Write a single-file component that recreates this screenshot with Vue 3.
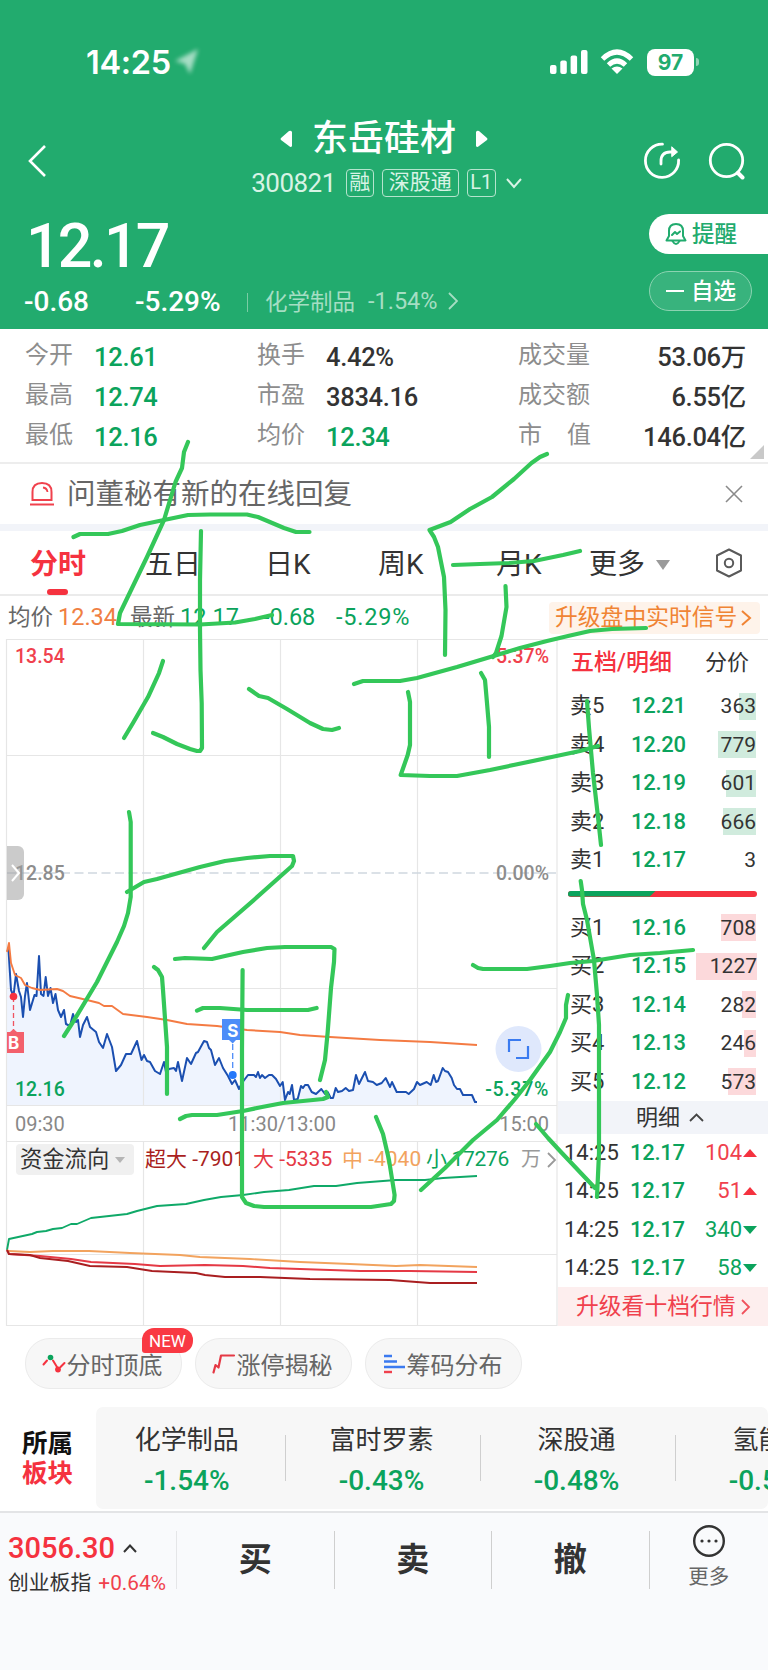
<script setup>
	import { ref, computed } from 'vue';

	const stats = [
		['今开', '12.61', true, '换手', '4.42%', false, '成交量', '53.06万'],
		['最高', '12.74', true, '市盈', '3834.16', false, '成交额', '6.55亿'],
		['最低', '12.16', true, '均价', '12.34', true, '市值', '146.04亿'],
	];

	const tabs = ['分时', '五日', '日K', '周K', '月K', '更多'];
	const activeTab = ref('分时');

	const asks = [
		{ label: '卖5', price: '12.21', qty: 363, bar: 17.5 },
		{ label: '卖4', price: '12.20', qty: 779, bar: 38.5 },
		{ label: '卖3', price: '12.19', qty: 601, bar: 30 },
		{ label: '卖2', price: '12.18', qty: 666, bar: 33 },
		{ label: '卖1', price: '12.17', qty: 3, bar: 0 },
	];

	const bids = [
		{ label: '买1', price: '12.16', qty: 708, bar: 35 },
		{ label: '买2', price: '12.15', qty: 1227, bar: 61 },
		{ label: '买3', price: '12.14', qty: 282, bar: 14 },
		{ label: '买4', price: '12.13', qty: 246, bar: 12 },
		{ label: '买5', price: '12.12', qty: 573, bar: 28 },
	];

	const trades = [
		{ time: '14:25', price: '12.17', qty: 104, up: true },
		{ time: '14:25', price: '12.17', qty: 51, up: true },
		{ time: '14:25', price: '12.17', qty: 340, up: false },
		{ time: '14:25', price: '12.17', qty: 58, up: false },
	];

	const sectors = [
		{ name: '化学制品', change: '-1.54%' },
		{ name: '富时罗素', change: '-0.43%' },
		{ name: '深股通', change: '-0.48%' },
		{ name: '氢能源', change: '-0.52%' },
	];

	const price =
		'7,951 8.5,950 11,990 13.5,996 16,974 19,991 21,997 23,1017 25,996 27,983 30,1010 33,1000 34.5,995 36.5,996 39,956 41,994 43.5,996 45.7,977 48,996 50.5,988 53,1003 55.5,994 58,1010 61,1017 64,1010 66,1024 70,1026 73,1014 76,1022 78,1020 80,1037 83,1025 87,1017 90,1027 96,1032 99,1042 103,1048 107,1034 112,1047 116,1071 121,1065 126,1054 131,1054 137,1041 141.5,1060 144,1055 147,1061 150,1062 155,1071 160,1074 164,1062 166,1072 169,1069 174,1068 176,1071 178,1062 182,1081 187,1058 191,1064 196,1053 198,1052 204,1041 207,1042 209,1048 211,1050 215,1065 219,1058 223,1068 228,1076 232,1084 235,1080 239,1089 242,1083 248,1075 254,1075 256,1077 258,1072 260,1078 262,1075 265,1078 269,1075 272,1075 276,1079 280,1086 282.7,1082 285,1100 288,1092 289.7,1094 292,1085 294,1100 297.7,1099 301,1086 303,1088 305,1085 308,1085 311.7,1092 316,1094 321.3,1089 325,1094 327.7,1092 330.7,1098 333,1098 335.7,1088 338,1092 342,1091 345.7,1088 349,1091 353,1090 356,1075 359,1084 365,1072 368,1081 373,1082 376.7,1085 381.7,1083 385.7,1078 390,1087 392,1082 396.7,1092 406,1092 408.7,1094 414,1089 417,1082 420,1085 426.7,1082 430.7,1085 433.7,1075 436,1082 438,1081 442.7,1068 445,1071 448,1072 451.7,1078 454,1085 457,1089 460,1089 463,1095 472,1095 475,1102 477,1102';

	const average =
		'7,952 9,943 11,963 15,975 21,978 25,985 32,988 40,990 57,989 63,991 70,996 87,1000 99,1003 104,1006 112,1006 123,1014 147,1017 167,1020 187,1024 217,1026 247,1030 280,1032 300,1035 330,1037 380,1040 430,1042 477,1045';

	const area = computed(() => `${price} 477,1105 7,1105`);

	const flows = [
		{
			color: '#0fa968',
			points: '7,1250 9,1239 32,1234 37,1232 46,1231 53,1229 62,1228 71,1224 77,1224 91,1218 109,1216 127,1214 137,1211 157,1206 186,1204 204,1200 221,1197 243,1195 264,1192 289,1190 314,1186 336,1186 357,1183 396,1180 425,1180 443,1178 477,1176',
		},
		{
			color: '#f2a35e',
			points: '7,1250 9,1251 30,1252 53,1251 71,1251 89,1251 130,1253 180,1255 200,1257 250,1259 300,1262 350,1264 396,1266 420,1265 477,1267',
		},
		{
			color: '#e53945',
			points: '7,1250 9,1254 40,1256 71,1259 91,1262 135,1264 160,1266 205,1265 243,1266 270,1268 360,1271 410,1271 477,1272',
		},
		{
			color: '#a91e20',
			points: '7,1250 9,1254 30,1255 40,1258 68,1261 90,1266 127,1267 152,1271 196,1273 205,1275 225,1277 260,1277 310,1279 390,1280 410,1281.5 430,1283 477,1283',
		},
	];

	// handwritten strokes over the page
	const strokes = [
		'188,442 184,452 182,468 175.5,482 164,520 147,557 120,613 118,624 200,624.5 235,622.5 255,619 272,615',
		'73.5,537 80,534 108,534 122,531 140,525 164,520 188,515 210,514.5 247,514.5 258,517 284,528 296,532 309.5,532',
		'201,531 200,580 200,630 200.5,670 201.7,703 202,748 200,751 197,751 190,749 177,744 163,737 153,733',
		'163,661 159,673 148,697 133,723 124,738',
		'249,689 259,696 268,698 287,709 310,723 323,729 332,730 339,728',
		'547,454 540,457 531.5,463 514,479 492,497 470,509 450.6,522 429.5,530 434,537 438,547 444,577 445.5,610 445,655',
		'453,565 480,564 509,563 534,561 563,555 580,551',
		'505.5,586 506.5,607 501.5,636 496,653 493,657',
		'354,684 363,681 380,681 400,681 417,678 457,667 497,655 520,648 547,641 568,636 590,631 612,629 646,628',
		'408,692 410,702 410,745 407.7,755 400.7,775 430,776 457,776 490,770 547,758 580,751 598,746',
		'481,673 485,680 487,703 489,727 489,757',
		'129,812 130.7,822 130.7,897 128,913 124,926 117,942 97,982 73,1022 64,1036',
		'127,892 144,882 157,879 200,867 225,861 247,858 270,856 293,856 294,861 292,866 255,899 217,932 204,948',
		'154,967 158,970 162,977 163,990 167,1047 167,1094',
		'175,959 185,958 212,959 225,956 243,952 267,948 285,947 331,947 334.5,949 334,962 331,988 327.6,1033 325,1060 320,1080',
		'197,1010.6 203,1008 220,1008 247,1010 308,1010 316.6,1008',
		'242.6,970 242,1050 242,1197 246,1203 254,1206 264,1207 371,1207 391,1204 394,1201 394.6,1195 389,1160 383,1134 376,1117',
		'180,1119 186,1116 192,1115 217,1115 243,1111 262,1107 283,1103 323,1099 328,1097 326,1092',
		'587,701 589,728 593,773 598,817 601,845',
		'580.7,881 582,890 583,904 587,920 594,960 597,995 599,1025 599,1153 597,1197',
		'473,965 478,968 483,969 527,969 550,966 570,963 593,961 630,955 660,953 693,950',
		'568,995 566,1005 566,1018 560,1032 550,1052 530,1080 515,1099 497,1120 473,1140 445,1168 421,1190',
		'536,1124 548,1138 560,1151 595,1188',
	];
</script>

<template>
	<main>
		<header class="top">
			<div class="status">
				<span class="clock">14:25</span>
				<svg class="location" width="30" height="30" viewBox="0 0 30 30">
					<path d="M25 2 L17 27 L12 17 L2 14 Z" fill="#fff" opacity=".6" />
				</svg>
				<svg class="signal" width="38" height="26" viewBox="0 0 38 26" fill="#fff">
					<rect x="0" y="16" width="6.5" height="9" rx="2" />
					<rect x="10.3" y="11.5" width="6.5" height="13.5" rx="2" />
					<rect x="20.6" y="6.5" width="6.5" height="18.5" rx="2" />
					<rect x="31" y="1" width="6.5" height="24" rx="2" />
				</svg>
				<svg class="wifi" width="34" height="26" viewBox="0 0 34 26" fill="none" stroke="#fff" stroke-width="5">
					<path d="M2.5 10 Q17 -4 31.5 10" />
					<path d="M8.5 16 Q17 8 25.5 16" />
					<path d="M17 25 L11.5 19.6 Q17 15.5 22.5 19.6 Z" fill="#fff" stroke="none" />
				</svg>
				<span class="battery">97</span>
				<span class="battery-tip"></span>
			</div>

			<div class="nav">
				<svg class="back" width="20" height="34" viewBox="0 0 20 34" fill="none" stroke="#fff" stroke-width="2.6">
					<path d="M18 2 L3 17 L18 32" />
				</svg>
				<div class="title">
					<div class="name">
						<svg width="13" height="18" viewBox="0 0 13 18"><path d="M12 2 V16 Q11 18 9 16 L1 10 Q0 9 1 8 L9 1 Q11 0 12 2Z" fill="#fff" /></svg>
						<h1>东岳硅材</h1>
						<svg width="13" height="18" viewBox="0 0 13 18"><path d="M1 2 V16 Q2 18 4 16 L12 10 Q13 9 12 8 L4 1 Q2 0 1 2Z" fill="#fff" /></svg>
					</div>
					<div class="code">
						<span class="digits">300821</span>
						<span class="tag">融</span>
						<span class="tag wide">深股通</span>
						<span class="tag level">L1</span>
						<svg width="16" height="12" viewBox="0 0 16 12" fill="none" stroke="#d8f3e5" stroke-width="2"><path d="M1 2 L8 10 L15 2" /></svg>
					</div>
				</div>
				<svg class="share" width="38" height="38" viewBox="0 0 38 38" fill="none" stroke="#fff" stroke-width="2.8" stroke-linecap="round">
					<path d="M19.5 2.2 A16.6 16.6 0 1 0 35.6 18" />
					<path d="M18 22 V19 Q18 10 27 10 H32" />
					<path d="M29 5 L34.5 10 L29 14.5 Z" fill="#fff" stroke-width="1" />
				</svg>
				<svg width="38" height="38" viewBox="0 0 38 38" fill="none" stroke="#fff" stroke-width="2.8" stroke-linecap="round">
					<circle cx="18.5" cy="18.5" r="16.2" />
					<path d="M30 31 L34.5 35.5" stroke-width="4" />
				</svg>
			</div>

			<div class="quote">
				<div>
					<div class="last">12.17</div>
					<div class="change">
						<span class="diff">-0.68</span>
						<span class="pct">-5.29%</span>
						<i></i>
						<span class="industry">化学制品</span>
						<span class="ipct">-1.54%</span>
						<svg width="10" height="18" viewBox="0 0 10 18" fill="none" stroke="#a5dec3" stroke-width="1.8"><path d="M1 1 L9 9 L1 17" /></svg>
					</div>
				</div>
				<div class="actions">
					<button class="remind">
						<svg width="22" height="24" viewBox="0 0 22 24" fill="none" stroke="#21ab6e" stroke-width="2" stroke-linejoin="round" stroke-linecap="round">
							<path d="M4 12 V9 Q4 2 11 2 Q18 2 18 9 V14 L20.5 18.5 H1.5 L4 14 Z" />
							<path d="M7.5 19 Q11 25 14.5 19" />
							<path d="M7 13 L10 10 L12 12 L15 9.5" />
						</svg>
						提醒
					</button>
					<button class="watch"><i></i>自选</button>
				</div>
			</div>
		</header>

		<section class="stats">
			<div v-for="row in stats" :key="row[0]" class="stat-row">
				<label>{{ row[0] }}</label>
				<b :class="{ down: row[2] }">{{ row[1] }}</b>
				<label>{{ row[3] }}</label>
				<b :class="{ down: row[5] }">{{ row[4] }}</b>
				<label :class="{ spread: row[6] === '市值' }">
					<span v-for="c in row[6]" :key="c">{{ c }}</span>
				</label>
				<b class="right">{{ row[7] }}</b>
			</div>
			<span class="corner"></span>
		</section>

		<section class="notice">
			<svg width="26" height="26" viewBox="0 0 26 26" fill="none" stroke="#f0414d" stroke-width="2">
				<path d="M3.5 19 V11 Q3.5 2 13 2 Q22.5 2 22.5 11 V19 Z" />
				<path d="M1 23.5 H25" />
				<path d="M14 6.5 Q18 7 18.5 11" stroke-width="1.8" />
			</svg>
			<p>问董秘有新的在线回复</p>
			<svg width="18" height="18" viewBox="0 0 18 18" stroke="#8a8a8a" stroke-width="1.6"><path d="M1 1 L17 17 M17 1 L1 17" /></svg>
		</section>

		<nav class="tabs">
			<a
				v-for="tab in tabs"
				:key="tab"
				:class="{ active: tab === activeTab }"
				@click="activeTab = tab"
			>{{ tab }}</a>
			<svg class="more-caret" width="14" height="10" viewBox="0 0 14 10"><path d="M0 0 H14 L7 10Z" fill="#9a9a9a" /></svg>
			<svg class="settings" width="28" height="30" viewBox="0 0 28 30" fill="none" stroke="#5a5a5a" stroke-width="2" stroke-linejoin="round">
				<path d="M14 1.5 L26 7.5 V22.5 L14 28.5 L2 22.5 V7.5 Z" />
				<circle cx="14" cy="15" r="4.2" />
			</svg>
		</nav>

		<section class="summary">
			<span>均价</span>
			<span class="num orange">12.34</span>
			<span>最新</span>
			<span class="num down">12.17</span>
			<span class="num down">-0.68</span>
			<span class="num down">-5.29%</span>
			<a>升级盘中实时信号<svg width="11" height="18" viewBox="0 0 11 18" fill="none" stroke="#f08434" stroke-width="2"><path d="M1 2 L9 9 L1 16" /></svg></a>
		</section>

		<section class="market">
			<div class="charts">
				<svg class="plot" width="558" height="687" viewBox="0 639 558 687" fill="none">
					<polygon :points="area" fill="#eff4fe" />
					<path d="M6.5 639.5 H557 M6.5 755.5 H557 M6.5 988.5 H557 M6.5 1105.5 H557 M6.5 1141.5 H557 M6.5 1254.5 H557 M6.5 1325.5 H557 M6.5 639 V1326 M557 639 V1326 M143.5 639 V1105 M280.5 639 V1105 M417.5 639 V1105 M143.5 1141 V1325 M280.5 1141 V1325 M417.5 1141 V1325" stroke="#e6e6e6" stroke-width="1.2" />
					<path d="M7 873 H557" stroke="#cfd8e0" stroke-width="1.4" stroke-dasharray="9 4.5" />
					<polyline :points="price" stroke="#1b4fb0" stroke-width="2" stroke-linejoin="round" />
					<polyline :points="average" stroke="#f47b43" stroke-width="1.9" stroke-linejoin="round" />
					<polyline v-for="f in flows" :key="f.color" :points="f.points" :stroke="f.color" stroke-width="1.9" stroke-linejoin="round" />

					<!-- buy marker -->
					<path d="M13.5 997 V1030" stroke="#ef5360" stroke-width="1.3" stroke-dasharray="5 3" />
					<circle cx="13.5" cy="996.5" r="3.8" fill="#f5323f" />
					<path d="M7 1032 H10 L13.5 1029 L17 1032 H24 V1053 H7 Z" fill="#f3606c" />
					<text x="13.5" y="1049" class="mark">B</text>
					<!-- sell marker -->
					<path d="M232.7 1044 V1072" stroke="#4d8df8" stroke-width="1.3" stroke-dasharray="6 3" />
					<circle cx="232.7" cy="1075" r="4" fill="#2478fa" />
					<path d="M222 1019 H243 V1040 H236 L232.7 1043.5 L229 1040 H222 Z" fill="#4d8df8" />
					<text x="232.7" y="1036.5" class="mark">S</text>

					<circle cx="518.5" cy="1049" r="23" fill="#dfe8fc" />
					<path d="M509 1052 V1040 H521 M528 1046 V1058 H516" stroke="#3a7bf0" stroke-width="2.2" />
				</svg>
				<div class="minute">
					<div class="axis"><span class="up">13.54</span><span class="up">5.37%</span></div>
					<div class="axis mid"><span>12.85</span><span>0.00%</span></div>
					<div class="axis"><span class="down">12.16</span><span class="down wider">-5.37%</span></div>
					<div class="drawer">
						<svg width="10" height="18" viewBox="0 0 10 18" fill="none" stroke="#fff" stroke-width="2"><path d="M1 1 L8 9 L1 17" /></svg>
					</div>
				</div>
				<div class="times"><span>09:30</span><span>11:30/13:00</span><span>15:00</span></div>
				<div class="flow">
					<span class="pill">资金流向<svg width="10" height="6" viewBox="0 0 10 6"><path d="M0 0 H10 L5 6Z" fill="#b5b5b5" /></svg></span>
					<span class="c1">超大 -7901</span>
					<span class="c2">大 -5335</span>
					<span class="c3">中 -4040</span>
					<span class="c4">小 17276</span>
					<span class="unit">万</span>
					<svg width="10" height="16" viewBox="0 0 10 16" fill="none" stroke="#999" stroke-width="1.8"><path d="M1 1 L8 8 L1 15" /></svg>
				</div>
			</div>

			<aside>
				<div class="book-tabs"><strong>五档/明细</strong><span>分价</span></div>
				<div v-for="a in asks" :key="a.label" class="level-row">
					<span>{{ a.label }}</span>
					<span class="down">{{ a.price }}</span>
					<span class="qty"><i class="ask" :style="{ width: a.bar + 'px' }"></i><em>{{ a.qty }}</em></span>
				</div>
				<div class="ratio"><i></i></div>
				<div v-for="b in bids" :key="b.label" class="level-row">
					<span>{{ b.label }}</span>
					<span class="down">{{ b.price }}</span>
					<span class="qty"><i class="bid" :style="{ width: b.bar + 'px' }"></i><em>{{ b.qty }}</em></span>
				</div>
				<div class="detail">
					明细
					<svg width="15" height="9" viewBox="0 0 15 9" fill="none" stroke="#444" stroke-width="1.8"><path d="M1 8 L7.5 1.5 L14 8" /></svg>
				</div>
				<div v-for="(t, i) in trades" :key="i" class="trade-row">
					<span>{{ t.time }}</span>
					<span class="down">{{ t.price }}</span>
					<span :class="['vol', t.up ? 'up' : 'down']">{{ t.qty }}</span>
					<svg width="14" height="8" viewBox="0 0 14 8">
						<path v-if="t.up" d="M0 8 L7 0 L14 8Z" fill="#f5323f" />
						<path v-else d="M0 0 H14 L7 8Z" fill="#0ba35c" />
					</svg>
				</div>
				<a class="upgrade">升级看十档行情<svg width="10" height="16" viewBox="0 0 10 16" fill="none" stroke="#f0525d" stroke-width="1.8"><path d="M1 1 L8 8 L1 15" /></svg></a>
			</aside>
		</section>

		<section class="chips">
			<button>
				<svg width="24" height="20" viewBox="0 0 24 20" fill="none" stroke="#f5323f" stroke-width="2" stroke-linecap="round">
					<path d="M1.5 10.5 L5 6.5 M11 6.5 L15 13 M18.5 13 L22.5 9" />
					<circle cx="8.5" cy="3.5" r="2.8" fill="#0ba35c" stroke="none" />
					<circle cx="16" cy="15.5" r="2.9" fill="#f5323f" stroke="none" />
				</svg>
				分时顶底
				<span class="new">NEW</span>
			</button>
			<button>
				<svg width="24" height="20" viewBox="0 0 24 20" fill="none" stroke="#e53945" stroke-width="2.2" stroke-linecap="round" stroke-linejoin="round">
					<path d="M1.5 18.5 L3.5 11 L6.5 13.5 L9 1.5 H22" />
				</svg>
				涨停揭秘
			</button>
			<button>
				<svg width="24" height="20" viewBox="0 0 24 20" fill="none" stroke="#3b7af0" stroke-width="2.4">
					<path d="M2 2 H10 M2 7.5 H15 M2 13 H23" />
					<path d="M2 18 H10" stroke="#f0414d" />
				</svg>
				筹码分布
			</button>
		</section>

		<section class="sectors">
			<h2>所属<br /><em>板块</em></h2>
			<div class="sector-list">
				<div v-for="s in sectors" :key="s.name" class="sector">
					<p>{{ s.name }}</p>
					<b>{{ s.change }}</b>
				</div>
			</div>
		</section>

		<footer>
			<div class="index">
				<p class="points">3056.30<svg width="14" height="9" viewBox="0 0 14 9" fill="none" stroke="#333" stroke-width="2"><path d="M1 8 L7 1.5 L13 8" /></svg></p>
				<p class="index-name">创业板指 <span>+0.64%</span></p>
			</div>
			<button>买</button>
			<button>卖</button>
			<button>撤</button>
			<div class="more">
				<svg width="34" height="34" viewBox="0 0 34 34" fill="none" stroke="#333" stroke-width="2.4">
					<circle cx="17" cy="17" r="14.8" />
					<path d="M10 17 h.01 M17 17 h.01 M24 17 h.01" stroke-width="3.2" stroke-linecap="round" />
				</svg>
				更多
			</div>
		</footer>

		<svg class="ink" width="768" height="1670" viewBox="0 0 768 1670" fill="none" stroke="#34c759" stroke-width="4.2" stroke-linecap="round" stroke-linejoin="round">
			<polyline v-for="(s, i) in strokes" :key="i" :points="s" />
		</svg>
	</main>
</template>

<style>
	body {
		margin: 0;
		background: #f9fafc;
	}
</style>

<style scoped>
	* {
		box-sizing: border-box;
		margin: 0;
		padding: 0;
	}
	main {
		position: relative;
		width: 768px;
		height: 1670px;
		overflow: hidden;
		background: #fff;
		color: #333;
		font-family: Roboto, 'Noto Sans CJK SC', sans-serif;
		white-space: nowrap;
	}
	button {
		border: 0;
		font-family: inherit;
	}
	i,
	em {
		font-style: normal;
	}
	svg {
		flex: none;
	}
	.down {
		color: #0ba35c;
	}
	.up {
		color: #f0414d;
	}

	.top {
		height: 329px;
		background: #22ab6e;
		color: #fff;
	}
	.status {
		display: flex;
		align-items: center;
		height: 120px;
		padding: 4px 0 0 86px;
	}
	.clock {
		width: 86px;
		font: 600 32.5px Inter, sans-serif;
		letter-spacing: -0.3px;
	}
	.location {
		margin-left: 1px;
		filter: blur(2px);
	}
	.signal {
		margin-left: 347px;
	}
	.wifi {
		margin-left: 12px;
	}
	.battery {
		width: 47px;
		height: 27px;
		margin-left: 13px;
		border-radius: 8px;
		background: #fff;
		color: #22ab6e;
		font: 700 21px/27px Inter, sans-serif;
		text-align: center;
	}
	.battery-tip {
		width: 3px;
		height: 8px;
		margin-left: 2px;
		border-radius: 0 4px 4px 0;
		background: #8fd5b5;
	}
	.nav {
		display: flex;
		align-items: center;
		height: 88px;
		padding-left: 27px;
	}
	.nav > svg {
		margin-bottom: 6px;
	}
	.title {
		display: flex;
		flex-direction: column;
		align-items: center;
		width: 420px;
		margin: 2px 49px 0 127px;
	}
	.name {
		display: flex;
		align-items: center;
		height: 36px;
	}
	.name h1 {
		margin: 0 19px;
		font-size: 36px;
		font-weight: 500;
		line-height: 36px;
	}
	.code {
		display: flex;
		align-items: center;
		height: 52px;
		margin-left: 5px;
		color: #d8f3e5;
	}
	.digits {
		margin-right: 10px;
		font-size: 26px;
		letter-spacing: -0.5px;
	}
	.tag {
		width: 28px;
		height: 28px;
		margin-right: 8px;
		border: 1.5px solid #b5e4cd;
		border-radius: 4px;
		font-size: 21px;
		line-height: 25px;
		text-align: center;
	}
	.tag.wide {
		width: 77px;
	}
	.tag.level {
		width: 29px;
		margin-right: 10px;
		font-size: 20px;
	}
	.share {
		margin-right: 27px;
	}
	.quote {
		display: flex;
		justify-content: space-between;
	}
	.last {
		height: 74px;
		padding-left: 26px;
		font-size: 61px;
		font-weight: 500;
		line-height: 76px;
		letter-spacing: -2.8px;
	}
	.change {
		display: flex;
		align-items: center;
		height: 40px;
		padding-left: 24px;
		font-size: 28px;
		font-weight: 500;
		line-height: 40px;
	}
	.diff {
		width: 111px;
	}
	.pct {
		width: 112px;
	}
	.change i {
		width: 1px;
		height: 19px;
		margin-right: 17px;
		background: #7acca4;
	}
	.industry {
		width: 103px;
		color: #a5dec3;
		font-size: 22.5px;
		font-weight: 400;
		line-height: 36px;
	}
	.ipct {
		width: 80px;
		margin-bottom: 2px;
		color: #a5dec3;
		font-size: 23.5px;
		font-weight: 400;
	}
	.change svg {
		margin-bottom: 3px;
	}
	.actions {
		display: flex;
		flex-direction: column;
		gap: 17px;
		width: 119px;
		padding-top: 6px;
	}
	.actions button {
		display: flex;
		align-items: center;
		height: 40px;
		font-size: 22.5px;
		font-weight: 500;
		line-height: 36px;
	}
	.remind {
		gap: 5px;
		padding-left: 16px;
		border-radius: 20px 0 0 20px;
		background: #fff;
		color: #22ab6e;
	}
	.actions .watch {
		width: 103px;
		padding-left: 16px;
		border: 1.5px solid #8bd3b1;
		border-radius: 20px;
		background: #38b37d;
		color: #fff;
	}
	.watch i {
		width: 18px;
		height: 2px;
		margin-right: 7px;
		background: #fff;
	}

	.stats {
		position: relative;
		height: 135px;
		padding-top: 7px;
		border-bottom: 2px solid #ededed;
	}
	.stat-row {
		display: grid;
		grid-template-columns: 69px 163px 69px 192px 90px 138px;
		align-items: center;
		height: 40px;
		padding-left: 25px;
		font-size: 25.5px;
	}
	.stat-row label {
		display: flex;
		margin-top: -2px;
		color: #8d8d8d;
		font-size: 24px;
		line-height: 36px;
	}
	.stat-row label.spread {
		width: 73px;
		justify-content: space-between;
	}
	.stat-row b {
		padding-top: 2px;
		font-weight: 500;
		line-height: 36px;
		letter-spacing: -0.3px;
	}
	.stat-row .right {
		text-align: right;
	}
	.corner {
		position: absolute;
		right: 4px;
		bottom: 3px;
		border: 7.5px solid;
		border-color: transparent #c9c9c9 #c9c9c9 transparent;
	}

	.notice {
		display: flex;
		align-items: center;
		height: 67px;
		padding: 0 25px 0 29px;
		border-bottom: 7px solid #f2f4f9;
	}
	.notice p {
		flex: 1;
		margin: 2px 0 0 12px;
		color: #666;
		font-size: 28.5px;
		line-height: 40px;
	}

	.tabs {
		display: flex;
		align-items: center;
		height: 65px;
		padding: 5px 0 0 30px;
		border-bottom: 2px solid #ebebeb;
		font-size: 28px;
	}
	.tabs a {
		position: relative;
		width: 115px;
		line-height: 62px;
	}
	.tabs a:nth-child(2) {
		width: 120px;
	}
	.tabs a:nth-child(3) {
		width: 113px;
	}
	.tabs a:nth-child(4) {
		width: 118px;
	}
	.tabs a:nth-child(5) {
		width: 93px;
	}
	.tabs a:nth-child(6) {
		width: 67px;
	}
	.tabs .active {
		color: #f5323f;
		font-weight: 700;
	}
	.tabs .active::after {
		content: '';
		position: absolute;
		left: 17px;
		bottom: 1px;
		width: 21px;
		height: 6px;
		border-radius: 3px;
		background: #f5323f;
	}
	.more-caret {
		margin-right: 45px;
	}
	.settings {
		margin-bottom: 4px;
	}

	.summary {
		display: flex;
		align-items: center;
		height: 43px;
		padding-left: 8px;
		color: #666;
		font-size: 22.5px;
		line-height: 42px;
	}
	.summary span {
		margin-top: -1px;
	}
	.summary .num {
		font-size: 23.5px;
	}
	.summary span:nth-child(1) {
		width: 50px;
	}
	.summary span:nth-child(2) {
		width: 72px;
	}
	.summary span:nth-child(3) {
		width: 50px;
	}
	.summary span:nth-child(4) {
		width: 83px;
	}
	.summary span:nth-child(5) {
		width: 73px;
	}
	.summary .orange {
		color: #f07f43;
	}
	.summary .down {
		color: #0ba35c;
	}
	.summary span:nth-child(6) {
		letter-spacing: 0.8px;
	}
	.summary a {
		display: flex;
		align-items: center;
		gap: 4px;
		width: 211px;
		height: 32px;
		margin-left: auto;
		margin-right: 8px;
		padding-left: 6px;
		border-radius: 4px;
		background: #fef3ea;
		color: #f08434;
		font-size: 22.8px;
		line-height: 30px;
	}

	.market {
		display: flex;
		height: 688px;
	}
	.charts {
		position: relative;
		width: 558px;
	}
	.plot {
		position: absolute;
		left: 0;
		top: 0;
	}
	.mark {
		fill: #fff;
		font-family: Inter, sans-serif;
		font-size: 17px;
		font-weight: 700;
		text-anchor: middle;
	}
	.minute {
		position: relative;
		display: flex;
		flex-direction: column;
		justify-content: space-between;
		height: 466px;
		padding: 6px 9px 3px 15px;
	}
	.axis {
		display: flex;
		justify-content: space-between;
		color: #8d8d8d;
		font-size: 19.5px;
		font-weight: 500;
		line-height: 24px;
	}
	.axis .wider {
		letter-spacing: 0.7px;
	}
	.drawer {
		position: absolute;
		left: 7px;
		top: 207px;
		display: flex;
		align-items: center;
		justify-content: center;
		width: 17px;
		height: 54px;
		border-radius: 0 6px 6px 0;
		background: rgba(160, 160, 160, 0.55);
	}
	.times {
		position: relative;
		display: flex;
		justify-content: space-between;
		height: 37px;
		padding: 0 9px 0 15px;
		color: #888;
		font-size: 20px;
		line-height: 39px;
	}
	.flow {
		position: relative;
		display: flex;
		align-items: center;
		height: 35px;
		padding-left: 16px;
		font-size: 21px;
		line-height: 31px;
	}
	.pill {
		display: flex;
		align-items: center;
		gap: 6px;
		width: 118px;
		height: 31px;
		margin-right: 11px;
		padding-left: 4px;
		border-radius: 4px;
		background: #f0f0f0;
		font-size: 22.3px;
		line-height: 29px;
	}
	.c1 {
		width: 108px;
		color: #a91e20;
	}
	.c2 {
		width: 89px;
		color: #e53945;
	}
	.c3 {
		width: 84px;
		color: #f2a35e;
	}
	.c4 {
		width: 95px;
		color: #0ba35c;
		letter-spacing: -0.3px;
	}
	.unit {
		width: 26px;
		color: #999;
		font-size: 20px;
	}

	aside {
		width: 210px;
		font-size: 22px;
	}
	.book-tabs {
		display: flex;
		justify-content: space-between;
		height: 48px;
		padding: 0 19px 0 13px;
		border-top: 1px solid #e4e4e4;
		line-height: 46px;
	}
	.book-tabs strong {
		color: #f5323f;
		font-size: 23px;
		font-weight: 500;
	}
	.level-row {
		display: grid;
		grid-template-columns: 61px 65px 61px;
		align-items: center;
		height: 38.5px;
		padding-left: 12px;
		line-height: 38px;
	}
	.level-row .down,
	.trade-row .down:not(.vol) {
		font-weight: 500;
		letter-spacing: -0.3px;
	}
	.qty {
		display: grid;
		justify-items: end;
		align-items: center;
		width: 60px;
	}
	.qty > * {
		grid-area: 1 / 1;
	}
	.qty i {
		height: 27px;
	}
	.qty em {
		font-size: 21px;
	}
	.ask {
		background: #d0ebdd;
	}
	.bid {
		background: #fcd9db;
	}
	.ratio {
		height: 6px;
		margin: 11px 11px 12px 10px;
		border-radius: 3px;
		background: #f5323f;
		overflow: hidden;
	}
	.ratio i {
		display: block;
		width: 88px;
		height: 6px;
		background: #0ba35c;
		clip-path: polygon(0 0, 100% 0, 93% 100%, 0 100%);
	}
	.detail {
		display: flex;
		align-items: center;
		gap: 9px;
		height: 33px;
		padding-left: 78px;
		background: #f2f4f9;
		line-height: 31px;
	}
	.trade-row {
		display: flex;
		align-items: center;
		height: 38.3px;
		padding-left: 6px;
		line-height: 38px;
	}
	.trade-row span:nth-child(1) {
		width: 66px;
	}
	.trade-row span:nth-child(2) {
		width: 60px;
	}
	.trade-row .vol {
		width: 52px;
		margin-right: 1px;
		text-align: right;
	}
	.upgrade {
		display: flex;
		align-items: center;
		gap: 5px;
		height: 39px;
		padding-left: 18px;
		background: #fdeeee;
		color: #f0414d;
		font-size: 22.8px;
		line-height: 37px;
	}

	.chips {
		display: flex;
		gap: 13px;
		height: 80px;
		padding: 11px 25px 0;
	}
	.chips button {
		position: relative;
		display: flex;
		align-items: center;
		gap: 1px;
		width: 157px;
		height: 51px;
		padding-left: 15.5px;
		border: 1.5px solid #ebebeb;
		border-radius: 25px;
		background: #f7f7f7;
		color: #666;
		font-size: 24px;
	}
	.new {
		position: absolute;
		left: 116px;
		top: -11px;
		width: 51px;
		height: 25px;
		border-radius: 12px 12px 12px 3px;
		background: #f93943;
		color: #fff;
		font-size: 17px;
		line-height: 26px;
		text-align: center;
	}

	.sectors {
		display: flex;
		height: 104px;
	}
	.sectors h2 {
		width: 96px;
		padding: 21px 0 0 22px;
		color: #111;
		font-size: 25.5px;
		line-height: 30px;
	}
	.sectors em {
		color: #f5323f;
	}
	.sector-list {
		display: flex;
		width: 672px;
		height: 102px;
		overflow: hidden;
		border-radius: 7px;
		background: #f7f7f7;
	}
	.sector {
		position: relative;
		flex: none;
		width: 195px;
		padding: 14px 3px 0 0;
		text-align: center;
	}
	.sector:first-child {
		width: 189.5px;
		padding-right: 8px;
	}
	.sector:not(:last-child)::after {
		content: '';
		position: absolute;
		right: 0;
		top: 28px;
		width: 1px;
		height: 46px;
		background: #cfcfcf;
	}
	.sector p {
		font-size: 26px;
		line-height: 39px;
	}
	.sector b {
		color: #0ba35c;
		font-size: 28px;
		font-weight: 500;
		line-height: 41px;
	}

	footer {
		display: flex;
		height: 160px;
		border-top: 2px solid #e3e4e6;
		background: #f9fafc;
	}
	.index {
		width: 177px;
		height: 58px;
		margin-top: 18px;
		padding-left: 8px;
		border-right: 1px solid #e5e6e8;
	}
	.points {
		display: flex;
		align-items: center;
		gap: 8px;
		height: 34px;
		color: #f5323f;
		font-size: 29px;
		font-weight: 500;
		line-height: 32px;
	}
	.index-name {
		font-size: 20.8px;
		line-height: 36px;
	}
	.index-name span {
		margin-left: 2px;
		color: #f0414d;
	}
	footer button {
		width: 157.5px;
		height: 58px;
		margin-top: 18px;
		border-right: 1.5px solid #cfcfcf;
		background: none;
		color: #333;
		font-size: 33px;
		font-weight: 700;
		line-height: 58px;
	}
	.more {
		display: flex;
		flex-direction: column;
		align-items: center;
		flex: 1;
		padding-top: 11px;
		color: #666;
		font-size: 20.5px;
		line-height: 39px;
	}

	.ink {
		position: absolute;
		left: 0;
		top: 0;
		pointer-events: none;
	}
</style>
